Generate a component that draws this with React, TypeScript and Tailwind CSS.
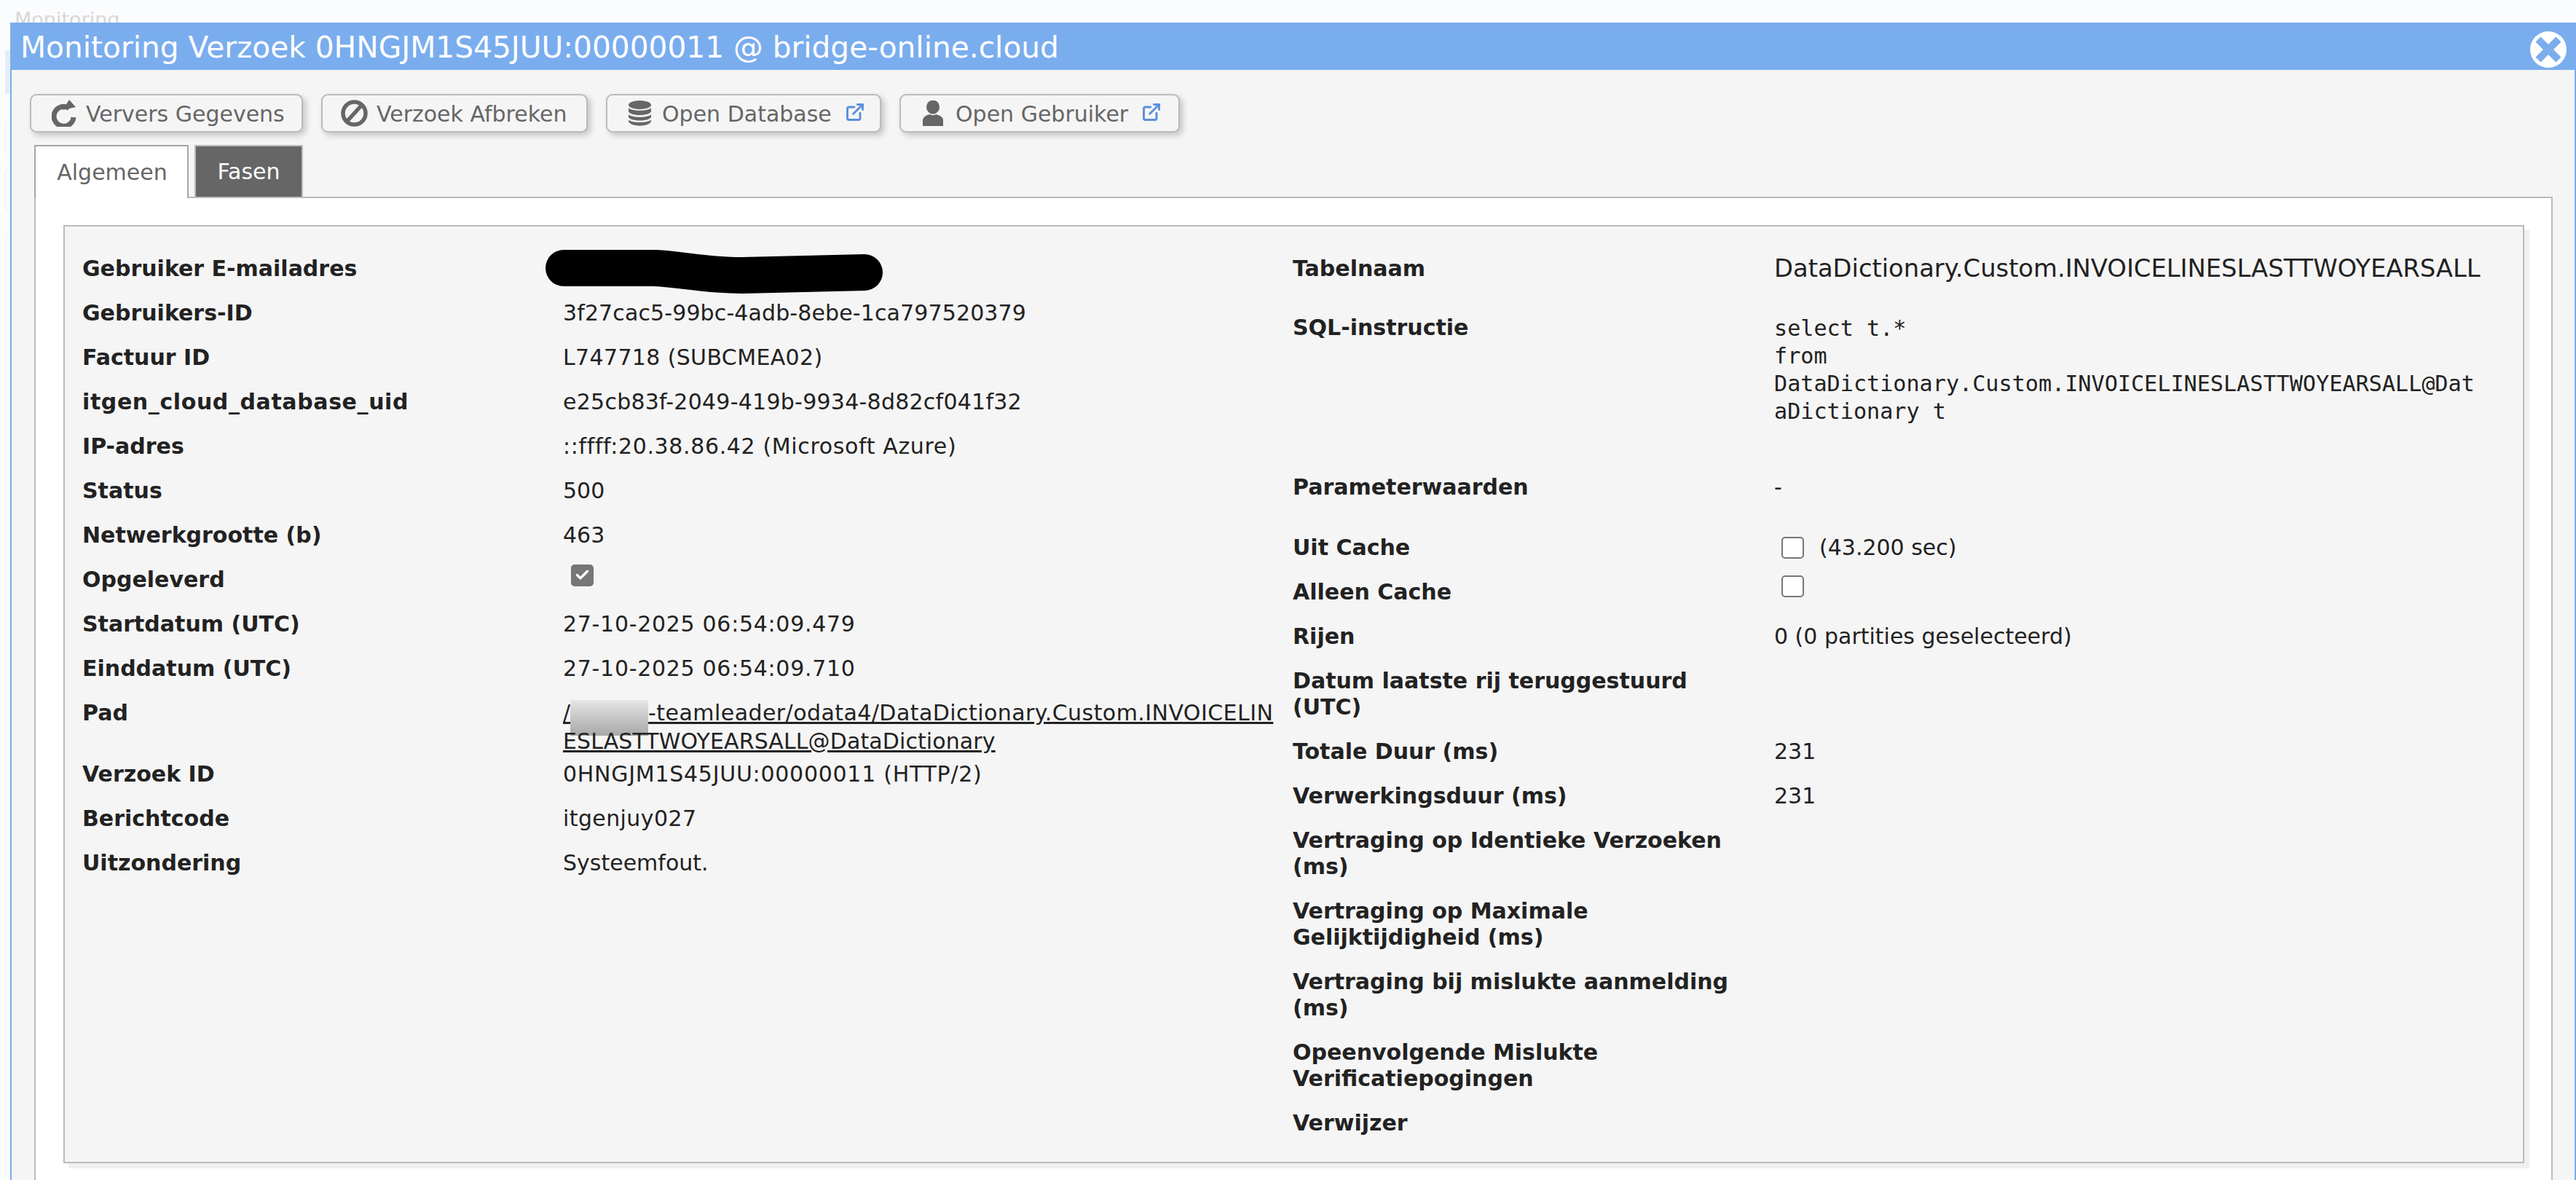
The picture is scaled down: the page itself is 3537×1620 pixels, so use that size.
import React from 'react';
import { Check, ExternalLink } from 'lucide-react';

type Row = { label: React.ReactNode; value?: React.ReactNode; cls: string };

const Box = ({ checked }: { checked?: boolean }) => (
  <span className={`inline-flex items-center justify-center w-[31px] h-[30px] rounded-[5px] border-2 ${checked ? 'bg-[#767676] border-[#767676]' : 'bg-white border-[#767676]'}`}>
    {checked && <Check size={21} strokeWidth={4} className="text-white" />}
  </span>
);

const RefreshIcon = () => (
  <svg width="34" height="37" viewBox="0 0 34 37" fill="none">
    <path d="M24 11.5 A13.5 13.5 0 1 0 30 24" stroke="#666666" strokeWidth="7" />
    <path d="M24 0 L33 10 L15 14 Z" fill="#666666" />
  </svg>
);

const BanIcon = () => (
  <svg width="37" height="37" viewBox="0 0 37 37" fill="none" stroke="#666666" strokeWidth="5.5">
    <circle cx="18.5" cy="18.5" r="15.5" />
    <path d="M28 8 L9 29" />
  </svg>
);

const DatabaseIcon = () => (
  <svg width="31" height="35" viewBox="0 0 31 35" fill="#666666">
    <ellipse cx="15.5" cy="6" rx="15.5" ry="6" />
    <path d="M0 10 C4 15 27 15 31 10 V15.5 C27 21.5 4 21.5 0 15.5 Z" />
    <path d="M0 19 C4 24 27 24 31 19 V23 C27 29 4 29 0 23 Z" />
    <path d="M0 26.5 C4 31 27 31 31 26.5 V29 C27 36.5 4 36.5 0 29 Z" />
  </svg>
);

const UserIcon = () => (
  <svg width="28" height="35" viewBox="0 0 28 35" fill="#666666">
    <ellipse cx="14" cy="9" rx="9" ry="9.5" />
    <path d="M0 35 V27 C0 22 6 20 9.5 19 C12 20.5 16 20.5 18.5 19 C22 20 28 22 28 27 V35 Z" />
  </svg>
);

const CloseIcon = () => (
  <svg width="50" height="50" viewBox="0 0 50 50" fill="none" stroke="#7aadee" strokeWidth="10">
    <path d="M11 11 L39 39 M39 11 L11 39" />
  </svg>
);

const LEFT: Row[] = [
  { label: 'Gebruiker E-mailadres', cls: 'h-[61px]', value: (
    <svg className="absolute left-[-24px] top-[-8px] w-[463px] h-[62px]" viewBox="0 0 463 62" fill="none">
      <path d="M25 25 L150 25 C190 27 220 35 271 35 L438 31" stroke="#000" strokeWidth="50" strokeLinecap="round" strokeLinejoin="round" />
    </svg>
  ) },
  { label: 'Gebruikers-ID', value: <span className="tracking-[0.12px]">3f27cac5-99bc-4adb-8ebe-1ca797520379</span>, cls: 'h-[61px]' },
  { label: 'Factuur ID', value: <span className="tracking-[0.36px]">L747718 (SUBCMEA02)</span>, cls: 'h-[61px]' },
  { label: <span className="tracking-[0.6px]">itgen_cloud_database_uid</span>, value: <span className="tracking-[0.25px]">e25cb83f-2049-419b-9934-8d82cf041f32</span>, cls: 'h-[61px]' },
  { label: 'IP-adres', value: <span className="tracking-[0.64px]">::ffff:20.38.86.42 (Microsoft Azure)</span>, cls: 'h-[61px]' },
  { label: 'Status', value: '500', cls: 'h-[61px]' },
  { label: 'Netwerkgrootte (b)', value: '463', cls: 'h-[61px]' },
  { label: 'Opgeleverd', value: <span className="block ml-[11px] -mt-[6px]"><Box checked /></span>, cls: 'h-[61px]' },
  { label: 'Startdatum (UTC)', value: <span className="tracking-[0.7px]">27-10-2025 06:54:09.479</span>, cls: 'h-[61px]' },
  { label: 'Einddatum (UTC)', value: <span className="tracking-[0.7px]">27-10-2025 06:54:09.710</span>, cls: 'h-[61px]' },
  { label: 'Pad', cls: 'h-[84px]', value: (
    <a className="underline">/<span className="inline-block w-[107px] h-[49px] -my-[10px] align-[-11px] bg-gradient-to-b from-[#e6e6e6] to-[#a8a8a8]" /><span className="tracking-[0.44px]">-teamleader/odata4/DataDictionary.Custom.INVOICELIN</span><br /><span className="tracking-[0.1px]">ESLASTTWOYEARSALL@DataDictionary</span></a>
  ) },
  { label: 'Verzoek ID', value: <span className="tracking-[0.73px]">0HNGJM1S45JUU:00000011 (HTTP/2)</span>, cls: 'h-[61px]' },
  { label: 'Berichtcode', value: <span className="tracking-[0.4px]">itgenjuy027</span>, cls: 'h-[61px]' },
  { label: 'Uitzondering', value: 'Systeemfout.', cls: 'h-[61px]' },
];

const RIGHT: Row[] = [
  { label: 'Tabelnaam', value: <span className="text-[33.75px]">DataDictionary.Custom.INVOICELINESLASTTWOYEARSALL</span>, cls: 'h-[81px]' },
  { label: 'SQL-instructie', cls: 'h-[219px]', value: (
    <div className="max-w-[975px] font-['DejaVu_Sans_Mono',monospace] text-[30.15px] leading-[38px] break-all">
      select t.*<br />from<br />DataDictionary.Custom.INVOICELINESLASTTWOYEARSALL@DataDictionary t
    </div>
  ) },
  { label: 'Parameterwaarden', value: '-', cls: 'h-[83px]' },
  { label: 'Uit Cache', value: <span className="flex items-center gap-[21px] pl-[10px]"><Box /> (43.200 sec)</span>, cls: 'h-[61px]' },
  { label: 'Alleen Cache', value: <span className="block pl-[10px] -mt-[5px]"><Box /></span>, cls: 'h-[61px]' },
  { label: 'Rijen', value: '0 (0 partities geselecteerd)', cls: 'h-[61px]' },
  { label: <>Datum laatste rij teruggestuurd (UTC)</>, cls: 'h-[97px]' },
  { label: 'Totale Duur (ms)', value: '231', cls: 'h-[61px]' },
  { label: 'Verwerkingsduur (ms)', value: '231', cls: 'h-[61px]' },
  { label: 'Vertraging op Identieke Verzoeken (ms)', cls: 'h-[97px]' },
  { label: 'Vertraging op Maximale Gelijktijdigheid (ms)', cls: 'h-[97px]' },
  { label: 'Vertraging bij mislukte aanmelding (ms)', cls: 'h-[97px]' },
  { label: 'Opeenvolgende Mislukte Verificatiepogingen', cls: 'h-[97px]' },
  { label: 'Verwijzer', cls: 'h-[61px]' },
];

const Btn = ({ icon, text, link, cls, gap }: { icon: React.ReactNode; text: string; link?: boolean; cls: string; gap: string }) => (
  <button className={`flex items-center h-[53px] ${cls} bg-[#f5f5f5] border-2 border-[#bbbbbb] rounded-[9px] shadow-[4px_4px_8px_rgba(0,0,0,0.2)] text-[#666666] text-[30px]`}>
    {icon}
    <span className={`${gap} pt-[3px] whitespace-nowrap`}>{text}</span>
    {link && <ExternalLink size={28} strokeWidth={2.5} className="ml-[18px] -mt-[3px] text-[#5b8fdc]" />}
  </button>
);

function Column({ rows, w, labelW }: { rows: Row[]; w: string; labelW: string }) {
  return (
    <div className={`${w} shrink-0`}>
      {rows.map((r, i) => (
        <div key={i} className={`flex ${r.cls}`}>
          <div className={`${labelW} shrink-0 font-bold pr-[40px]`}>{r.label}</div>
          <div className="relative flex-1 min-w-0">{r.value}</div>
        </div>
      ))}
    </div>
  );
}

export default function App() {
  return (
    <div className="h-[1620px] overflow-hidden bg-[#fbfcfe] pt-[31px] pl-[14px] relative font-['DejaVu_Sans',sans-serif] leading-[36px] text-[30px] text-[#222222]">
      {/* pagina achter de dialoog */}
      <span className="absolute left-[20px] top-[12px] text-[27px] leading-[30px] text-[#d8d8d8]">Monitoring</span>
      <div className="absolute left-[7px] top-[69px] w-[7px] h-[60px] bg-[#e3edf9]" />
      <div className="absolute left-[7px] top-[163px] w-[7px] h-[51px] border-l border-y border-[#f0f0f0] rounded-l-[6px]" />
      <div className="absolute left-[7px] top-[231px] w-[7px] h-[58px] border-l border-y border-[#eeeeee] rounded-l-[6px]" />
      <div className="absolute left-[7px] top-[322px] w-[7px] h-[1298px] border-l border-t border-[#f2f2f2]" />

      <div className="relative h-full bg-[#f5f5f5] border-x-2 border-[#7aadee]">
        {/* titelbalk */}
        <div className="flex items-center justify-between h-[65px] bg-[#7aadee] -mx-[2px] pl-[14px] pr-[13px]">
          <span className="mt-[2px] text-white text-[40.7px] whitespace-nowrap">Monitoring Verzoek 0HNGJM1S45JUU:00000011 @ bridge-online.cloud</span>
          <span className="flex items-center justify-center w-[50px] h-[50px] mt-[9px] rounded-full bg-white">
            <CloseIcon />
          </span>
        </div>

        {/* knoppen */}
        <div className="flex gap-[25px] pl-[25px] pt-[33px]">
          <Btn cls="w-[375px] pl-[28px]" gap="ml-[13px]" text="Ververs Gegevens" icon={<RefreshIcon />} />
          <Btn cls="w-[366px] pl-[25px]" gap="ml-[12px]" text="Verzoek Afbreken" icon={<BanIcon />} />
          <Btn cls="w-[378px] pl-[29px]" gap="ml-[15px]" text="Open Database" link icon={<DatabaseIcon />} />
          <Btn cls="w-[385px] pl-[30px]" gap="ml-[17px]" text="Open Gebruiker" link icon={<UserIcon />} />
        </div>

        {/* tabs */}
        <div className="flex gap-[8px] pl-[31px] pt-[17px] h-[90px] items-end">
          <div className="relative z-10 flex items-center justify-center pl-[2px] w-[212px] h-[73px] bg-white border-2 border-b-0 border-[#a6a6a6] text-[#666666] text-[30px]">Algemeen</div>
          <div className="flex items-center justify-center w-[149px] h-[71px] mb-[2px] bg-[#666666] border-2 border-[#bbbbbb] border-b-0 text-white text-[30px]">Fasen</div>
        </div>

        <div className="ml-[31px] mr-[30px] -mt-[2px] h-[1400px] bg-white border-2 border-[#bbbbbb] pt-[37px] pl-[38px]">
          <div className="flex w-[3379px] h-[1288px] bg-[#f5f5f5] border-2 border-[#bbbbbb] shadow-[7px_7px_0_#f0f0f0] pl-[24px] pt-[40px]">
            <Column rows={LEFT} w="w-[1662px]" labelW="w-[660px]" />
            <Column rows={RIGHT} w="w-[1660px]" labelW="w-[661px]" />
          </div>
        </div>
      </div>
    </div>
  );
}
